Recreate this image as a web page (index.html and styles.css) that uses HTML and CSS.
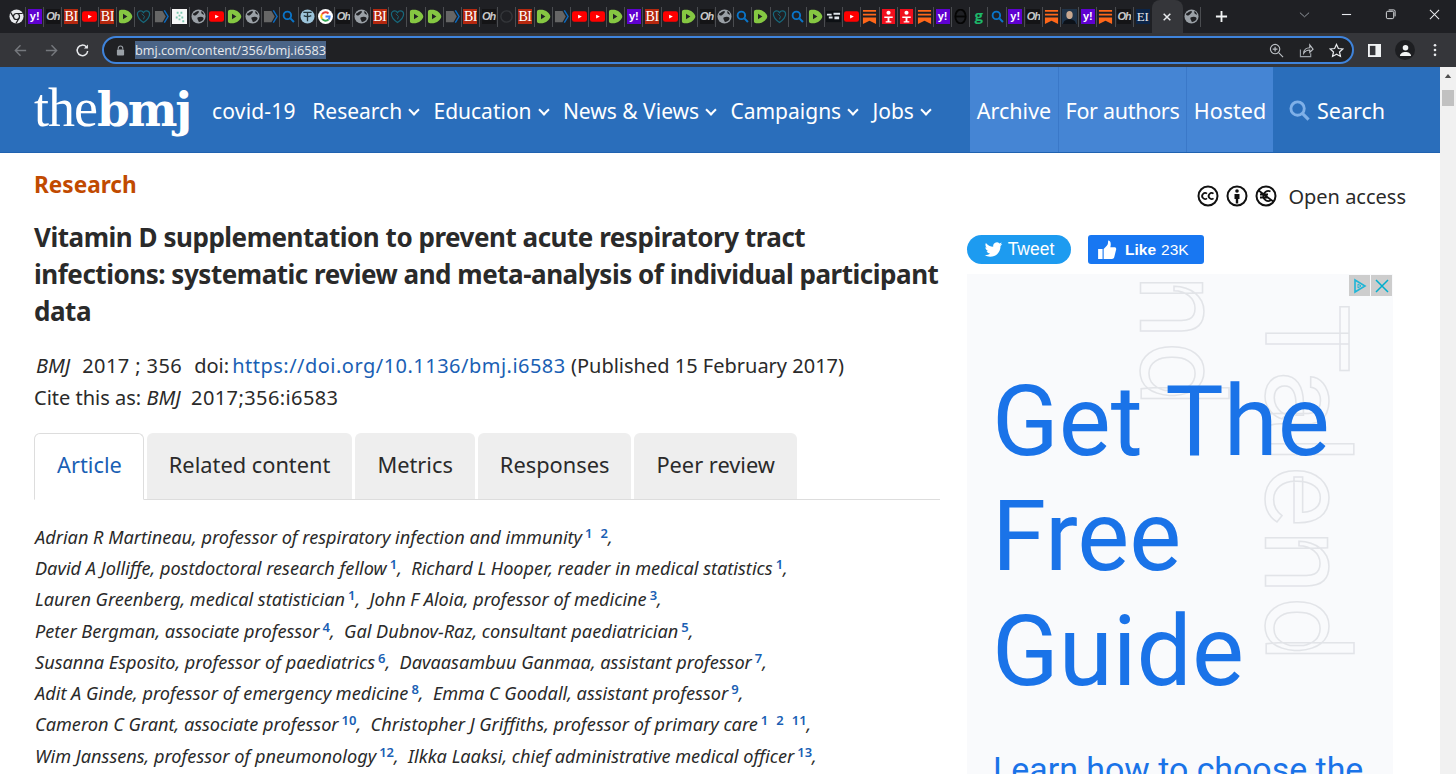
FILE: index.html
```html
<!DOCTYPE html>
<html lang="en">
<head>
    <meta charset="UTF-8">
    <meta name="viewport" content="width=device-width, initial-scale=1.0">
    <title>Vitamin D supplementation to prevent acute respiratory tract infections</title>
    <link rel="stylesheet" href="styles.css">
</head>
<body>
    <svg class="sprite" aria-hidden="true">
        <symbol id="chrome" viewBox="0 0 16 16"><circle cx="8" cy="8" r="7.500" fill="#e8eaed"/><circle cx="8" cy="8" r="3.200" fill="#e8eaed" stroke="#202124" stroke-width="1.300"/><path d="M8 4.800h6.600M5.200 9.600L1.900 3.900M10.800 9.600L7.500 15.300" stroke="#202124" stroke-width="1.300" fill="none"/></symbol>
        <symbol id="globe" viewBox="0 0 16 16"><circle cx="8" cy="8" r="7.500" fill="#9aa0a6"/><path d="M2 5c2-1 4-3 6-3 1 1 0 2-1 3S5 7 4 7 2 6 2 5zM7 9c2-1 5-1 6 0s0 3-2 4-3 1-3 0-2-3-1-4zM11 2c2 1 3 3 3 4-1 0-3-1-3-2z" fill="#202124"/></symbol>
        <symbol id="yt" viewBox="0 0 16 16"><rect x="0" y="2.500" width="16" height="11" rx="2.400" fill="#f00"/><path d="M6.500 6l4 2-4 2z" fill="#fff"/></symbol>
        <symbol id="rumble" viewBox="0 0 16 16"><path d="M3.400.8h3.400c3 0 8.400 4 8.400 7.200s-5.400 7.200-8.400 7.200H3.400C2 15.200 1 14 1 13V3C1 1.800 2 .8 3.400.8z" fill="#85c742"/><path d="M5.300 5v6l4.700-3z" fill="#202124"/></symbol>
        <symbol id="heart" viewBox="0 0 16 16"><path d="M8 14.500C4 11.500 1.500 8.500 1.500 5.500 1.500 3 3.500 2 5 2c1.300 0 2.300.7 3 1.800C8.700 2.700 9.700 2 11 2c1.500 0 3.500 1 3.500 3.500 0 3-2.500 6-6.500 9z" fill="none" stroke="#17677a" stroke-width="1.300"/><path d="M6 5l3 3-1 3" fill="none" stroke="#17677a"/></symbol>
        <symbol id="arrow" viewBox="0 0 16 16"><path d="M1 2h8l3.500 6L9 14H1z" fill="#666"/><path d="M11 1.500L15 8l-4 6.500" fill="none" stroke="#0a6cc4" stroke-width="1.500"/></symbol>
        <symbol id="search" viewBox="0 0 16 16"><circle cx="6.800" cy="6.800" r="4" fill="none" stroke="#0a74c8" stroke-width="2"/><path d="M10 10l3.800 3.800" stroke="#0a74c8" stroke-width="2.200"/></symbol>
        <symbol id="tether" viewBox="0 0 16 16"><circle cx="8" cy="8" r="7.500" fill="#9cc4da"/><path d="M3.500 3.500h9M8 3.500v9.500M4 7c2 1 6 1 8 0" fill="none" stroke="#23343a" stroke-width="1.400"/></symbol>
        <symbol id="google" viewBox="0 0 16 16"><circle cx="8" cy="8" r="8" fill="#fff"/><path d="M8 8h4.500a4.500 4.500 0 0 1-1.300 3.200" fill="none" stroke="#4285f4" stroke-width="2"/><path d="M11.200 11.200A4.500 4.500 0 0 1 4.300 10.500" fill="none" stroke="#34a853" stroke-width="2"/><path d="M4.300 10.500a4.500 4.500 0 0 1 0-5" fill="none" stroke="#fbbc05" stroke-width="2"/><path d="M4.300 5.500a4.500 4.500 0 0 1 6.900-.7" fill="none" stroke="#ea4335" stroke-width="2"/></symbol>
        <symbol id="qr" viewBox="0 0 16 16"><rect width="16" height="16" fill="#f7f7f7"/><path d="M5 3h2v2H5zM9 3h2v2H9zM7 6h2v2H7zM4 8h2v2H4zM10 8h2v2h-2zM7 10h2v2H7zM11 12h2v2h-2z" fill="#7cc9b0"/></symbol>
        <symbol id="dark" viewBox="0 0 16 16"><circle cx="8" cy="8" r="6" fill="none" stroke="#34363a" stroke-width="1.500"/></symbol>
        <symbol id="news" viewBox="0 0 16 16"><rect y="2" width="16" height="12" fill="#0d1014"/><path d="M1 5h5v2H1zM8 4h7v2H8zM3 8h4v2H3zM9 8h5v3H9z" fill="#dfe5ea"/></symbol>
        <symbol id="substack" viewBox="0 0 16 16"><path d="M1 1h14v2H1zM1 5h14v2H1zM1 9h14v7l-7-3.400L1 16z" fill="#ff6719"/></symbol>
        <symbol id="redfig" viewBox="0 0 16 16"><rect x="1" y="0" width="14" height="16" fill="#f10f1d"/><circle cx="8" cy="4" r="2.200" fill="#fff"/><path d="M3.500 8h9v1.500H9V13h2v1.500H5V13h2V9.500H3.500z" fill="#fff"/></symbol>
        <symbol id="theta" viewBox="0 0 16 16"><ellipse cx="8" cy="8" rx="5.500" ry="7.300" fill="none" stroke="#050505" stroke-width="2"/><path d="M3 8h10" stroke="#050505" stroke-width="2"/></symbol>
        <symbol id="photo" viewBox="0 0 16 16"><rect width="16" height="16" fill="#20344a"/><ellipse cx="8" cy="6.500" rx="3.400" ry="4.400" fill="#c9a890"/><path d="M1 16c1-4 4-5 7-5s6 1 7 5z" fill="#0c1118"/></symbol>
        <symbol id="twitter" viewBox="0 0 24 24"><path d="M23 5.100c-.8.400-1.700.6-2.600.700.900-.6 1.600-1.400 2-2.500-.9.500-1.900.9-2.900 1.100a4.600 4.600 0 0 0-7.800 4.200C8 8.400 4.600 6.600 2.400 3.800c-1.200 2.100-.6 4.800 1.400 6.100-.7 0-1.400-.2-2.100-.6 0 2.200 1.600 4.100 3.700 4.600-.7.200-1.400.2-2.100.1.600 1.800 2.300 3.100 4.300 3.200-1.900 1.500-4.300 2.200-6.800 1.900 2 1.300 4.500 2.100 7 2.100 8.500 0 13.300-7.200 13-13.600.9-.7 1.700-1.500 2.200-2.500z" fill="#fff"/></symbol>
    </svg>

    <div class="tabstrip">
        <span class="tab"><svg><use href="#chrome"/></svg></span>
        <span class="tab"><b class="yh">y!</b></span>
        <span class="tab"><b class="oh">Oh</b></span>
        <span class="tab"><b class="bi">BI</b></span>
        <span class="tab"><svg><use href="#yt"/></svg></span>
        <span class="tab"><b class="bi">BI</b></span>
        <span class="tab"><svg><use href="#rumble"/></svg></span>
        <span class="tab"><svg><use href="#heart"/></svg></span>
        <span class="tab"><svg><use href="#arrow"/></svg></span>
        <span class="tab"><svg><use href="#qr"/></svg></span>
        <span class="tab"><svg><use href="#globe"/></svg></span>
        <span class="tab"><svg><use href="#yt"/></svg></span>
        <span class="tab"><svg><use href="#rumble"/></svg></span>
        <span class="tab"><svg><use href="#globe"/></svg></span>
        <span class="tab"><svg><use href="#arrow"/></svg></span>
        <span class="tab"><svg><use href="#search"/></svg></span>
        <span class="tab"><svg><use href="#tether"/></svg></span>
        <span class="tab"><svg><use href="#google"/></svg></span>
        <span class="tab"><b class="oh">Oh</b></span>
        <span class="tab"><svg><use href="#globe"/></svg></span>
        <span class="tab"><b class="bi">BI</b></span>
        <span class="tab"><svg><use href="#heart"/></svg></span>
        <span class="tab"><svg><use href="#rumble"/></svg></span>
        <span class="tab"><svg><use href="#rumble"/></svg></span>
        <span class="tab"><svg><use href="#arrow"/></svg></span>
        <span class="tab"><b class="bi">BI</b></span>
        <span class="tab"><b class="oh">Oh</b></span>
        <span class="tab"><svg><use href="#dark"/></svg></span>
        <span class="tab"><b class="bi">BI</b></span>
        <span class="tab"><svg><use href="#rumble"/></svg></span>
        <span class="tab"><svg><use href="#arrow"/></svg></span>
        <span class="tab"><svg><use href="#yt"/></svg></span>
        <span class="tab"><svg><use href="#yt"/></svg></span>
        <span class="tab"><svg><use href="#rumble"/></svg></span>
        <span class="tab"><b class="yh">y!</b></span>
        <span class="tab"><b class="bi">BI</b></span>
        <span class="tab"><svg><use href="#yt"/></svg></span>
        <span class="tab"><svg><use href="#rumble"/></svg></span>
        <span class="tab"><b class="oh">Oh</b></span>
        <span class="tab"><svg><use href="#globe"/></svg></span>
        <span class="tab"><svg><use href="#search"/></svg></span>
        <span class="tab"><svg><use href="#rumble"/></svg></span>
        <span class="tab"><svg><use href="#heart"/></svg></span>
        <span class="tab"><svg><use href="#search"/></svg></span>
        <span class="tab"><svg><use href="#rumble"/></svg></span>
        <span class="tab"><svg><use href="#news"/></svg></span>
        <span class="tab"><svg><use href="#yt"/></svg></span>
        <span class="tab"><svg><use href="#substack"/></svg></span>
        <span class="tab"><svg><use href="#redfig"/></svg></span>
        <span class="tab"><svg><use href="#redfig"/></svg></span>
        <span class="tab"><svg><use href="#substack"/></svg></span>
        <span class="tab"><b class="yh">y!</b></span>
        <span class="tab"><svg><use href="#theta"/></svg></span>
        <span class="tab"><b class="gg">g</b></span>
        <span class="tab"><svg><use href="#search"/></svg></span>
        <span class="tab"><b class="yh">y!</b></span>
        <span class="tab"><b class="oh">Oh</b></span>
        <span class="tab"><svg><use href="#substack"/></svg></span>
        <span class="tab"><svg><use href="#photo"/></svg></span>
        <span class="tab"><b class="yh">y!</b></span>
        <span class="tab"><svg><use href="#substack"/></svg></span>
        <span class="tab"><b class="oh">Oh</b></span>
        <span class="tab no-sep"><b class="ei">EI</b></span>
        <span class="tab-active">
            <svg viewBox="0 0 12 12"><path d="M2 2l8 8M10 2l-8 8" stroke="#e8eaed" stroke-width="1.800"/></svg>
        </span>
        <span class="tab"><svg><use href="#globe"/></svg></span>
        <span class="new-tab">
            <svg viewBox="0 0 14 14"><path d="M7 1v12M1 7h12" stroke="#f1f3f4" stroke-width="2"/></svg>
        </span>
        <div class="window-btns">
            <svg viewBox="0 0 12 12"><path d="M1 4l5 4.500L11 4" fill="none" stroke="#9aa0a6"/></svg>
            <svg viewBox="0 0 12 12"><path d="M1 6h10" stroke="#e8eaed" stroke-width="1.200"/></svg>
            <svg viewBox="0 0 12 12"><rect x="1.500" y="2.500" width="8" height="8" rx="1.500" fill="none" stroke="#e8eaed"/><path d="M4 1h5.500a1.500 1.500 0 0 1 1.500 1.500V8" fill="none" stroke="#e8eaed"/></svg>
            <svg viewBox="0 0 12 12"><path d="M1 1l10 10M11 1L1 11" stroke="#e8eaed" stroke-width="1.100"/></svg>
        </div>
    </div>

    <div class="toolbar">
        <svg class="tool-btn" viewBox="0 0 16 16"><path d="M14 8H2.500M8 2.500L2.500 8 8 13.500" fill="none" stroke="#75787d" stroke-width="1.500"/></svg>
        <svg class="tool-btn" viewBox="0 0 16 16"><path d="M2 8h11.500M8 2.500L13.500 8 8 13.500" fill="none" stroke="#75787d" stroke-width="1.500"/></svg>
        <svg class="tool-btn" viewBox="0 0 16 16"><path d="M13.500 8.500A5.600 5.600 0 1 1 12 4" fill="none" stroke="#e8eaed" stroke-width="1.600"/><path d="M13.800 1.500v4.300H9.500z" fill="#e8eaed"/></svg>
        <div class="omnibox">
            <svg class="lock" viewBox="0 0 10 12"><path d="M2.500 5V3.500a2.500 2.500 0 0 1 5 0V5" fill="none" stroke="#9aa0a6" stroke-width="1.200"/><rect x="1" y="5" width="8" height="6.500" rx="1" fill="#9aa0a6"/></svg>
            <span class="url">bmj.com/content/356/bmj.i6583</span>
            <div class="omni-icons">
                <svg viewBox="0 0 16 16"><circle cx="6.500" cy="6.500" r="5" fill="none" stroke="#bdc1c6" stroke-width="1.200"/><path d="M10.500 10.500L15 15M4 6.500h5M6.500 4v5" stroke="#bdc1c6" stroke-width="1.200"/></svg>
                <svg viewBox="0 0 16 16"><path d="M1.500 7v7.500h11V11" fill="none" stroke="#9aa0a6" stroke-width="1.200"/><path d="M5 11c0-4 3-6 6.500-6V2L15 6.500 11.500 10V7.500C8.500 7.500 6.500 8.500 5 11z" fill="none" stroke="#bdc1c6" stroke-width="1.200"/></svg>
                <svg viewBox="0 0 16 16"><path d="M8 1.500l2 4.400 4.700.5-3.500 3.200 1 4.700L8 11.900l-4.200 2.400 1-4.700L1.300 6.400 6 5.900z" fill="none" stroke="#e8eaed" stroke-width="1.300"/></svg>
            </div>
        </div>
        <svg class="side-panel" viewBox="0 0 14 14"><rect x="1" y="1" width="12" height="12" fill="none" stroke="#f1f3f4" stroke-width="2"/><rect x="8" y="1" width="5" height="12" fill="#f1f3f4"/></svg>
        <span class="avatar">
            <svg viewBox="0 0 14 14"><circle cx="7" cy="4" r="3" fill="#f1f3f4"/><path d="M1 13c0-3 3-4.500 6-4.500s6 1.500 6 4.500z" fill="#f1f3f4"/></svg>
        </span>
        <svg class="menu-dots" viewBox="0 0 4 16"><circle cx="2" cy="2.500" r="1.500" fill="#e8eaed"/><circle cx="2" cy="8" r="1.500" fill="#e8eaed"/><circle cx="2" cy="13.500" r="1.500" fill="#e8eaed"/></svg>
    </div>

    <div class="viewport">
        <div class="page">
            <header class="site-header">
                <a class="logo"><span class="logo-the">the</span><span class="logo-bmj">bmj</span></a>
                <nav class="main-nav">
                    <a class="nav-covid">covid-19</a>
                    <a class="has-menu">Research</a>
                    <a class="has-menu">Education</a>
                    <a class="has-menu">News &amp; Views</a>
                    <a class="has-menu">Campaigns</a>
                    <a class="has-menu">Jobs</a>
                </nav>
                <nav class="side-nav">
                    <a class="nav-archive">Archive</a>
                    <a class="nav-authors">For authors</a>
                    <a class="nav-hosted">Hosted</a>
                </nav>
                <a class="search-link">
                    <svg viewBox="0 0 22 22"><circle cx="9" cy="9" r="7" fill="none" stroke="#7fb0e8" stroke-width="3"/><path d="M14 14l6.500 6.500" stroke="#7fb0e8" stroke-width="3.200"/></svg>
                    Search
                </a>
            </header>

            <div class="content">
                <main class="article">
                    <p class="section-label">Research</p>
                    <h1>Vitamin D supplementation to prevent acute respiratory tract infections: systematic review and meta-analysis of individual participant data</h1>
                    <p class="meta"><em class="journal">BMJ</em><span class="volume">2017 ; 356</span><span class="doi">doi:</span> <a href="#">https://doi.org/10.1136/bmj.i6583</a> (Published 15 February 2017)</p>
                    <p class="meta">Cite this as: <em>BMJ</em>&nbsp; <span class="cite-ref">2017;356:i6583</span></p>

                    <ul class="tabs">
                        <li class="active">Article</li>
                        <li>Related content</li>
                        <li>Metrics</li>
                        <li>Responses</li>
                        <li>Peer review</li>
                    </ul>

                    <div class="authors">
                        <p>Adrian R Martineau, professor of respiratory infection and immunity<sup>1</sup><sup class="next">2</sup>,</p>
                        <p>David A Jolliffe, postdoctoral research fellow<sup>1</sup>, &nbsp;Richard L Hooper, reader in medical statistics<sup>1</sup>,</p>
                        <p>Lauren Greenberg, medical statistician<sup>1</sup>, &nbsp;John F Aloia, professor of medicine<sup>3</sup>,</p>
                        <p>Peter Bergman, associate professor<sup>4</sup>, &nbsp;Gal Dubnov-Raz, consultant paediatrician<sup>5</sup>,</p>
                        <p>Susanna Esposito, professor of paediatrics<sup>6</sup>, &nbsp;Davaasambuu Ganmaa, assistant professor<sup>7</sup>,</p>
                        <p>Adit A Ginde, professor of emergency medicine<sup>8</sup>, &nbsp;Emma C Goodall, assistant professor<sup>9</sup>,</p>
                        <p>Cameron C Grant, associate professor<sup>10</sup>, &nbsp;Christopher J Griffiths, professor of primary care<sup>1</sup><sup class="next">2</sup><sup class="next">11</sup>,</p>
                        <p>Wim Janssens, professor of pneumonology<sup>12</sup>, &nbsp;Ilkka Laaksi, chief administrative medical officer<sup>13</sup>,</p>
                    </div>
                </main>

                <aside class="sidebar">
                    <div class="licence">
                        <svg viewBox="0 0 22 22"><circle cx="11" cy="11" r="9.500" fill="none" stroke="#111" stroke-width="2"/><path d="M10 8.600a3 3 0 1 0 0 4.800M16.500 8.600a3 3 0 1 0 0 4.800" fill="none" stroke="#111" stroke-width="1.800"/></svg>
                        <svg viewBox="0 0 22 22"><circle cx="11" cy="11" r="9.500" fill="none" stroke="#111" stroke-width="2"/><circle cx="11" cy="6" r="1.800" fill="#111"/><path d="M8.500 9h5v5h-1.300v4.500H9.800V14H8.500z" fill="#111"/></svg>
                        <svg viewBox="0 0 22 22"><circle cx="11" cy="11" r="9.500" fill="none" stroke="#111" stroke-width="2"/><path d="M15.500 6.500a5 5 0 1 0 0 9M5 9.500h8M5 12.500h8M3 5l16 12" fill="none" stroke="#111" stroke-width="1.800"/></svg>
                        <span>Open access</span>
                    </div>
                    <div class="social">
                        <a class="tweet"><svg><use href="#twitter"/></svg>Tweet</a>
                        <a class="like">
                            <svg viewBox="0 0 18 18"><path d="M1 8h4v9H1zM6 8l3-3c1-1 1-3 1-4.500 2 0 3 2 2 6h4c1.500 0 1.500 2 1 3l-1.500 6c-.3 1-1 1.500-2 1.500H6z" fill="#fff"/></svg>
                            <strong>Like</strong> 23K
                        </a>
                    </div>
                    <div class="ad">
                        <span class="outline outline-back">Talend</span>
                        <span class="outline outline-front">Talend</span>
                        <div class="ad-badges">
                            <span><svg viewBox="0 0 16 16"><path d="M3 2l10 6-10 6z" fill="none" stroke="#1fb5d6" stroke-width="1.600"/><path d="M6 6v4l3-2z" fill="none" stroke="#1fb5d6"/></svg></span>
                            <span><svg viewBox="0 0 16 16"><path d="M2 2l12 12M14 2L2 14" stroke="#00aecd" stroke-width="1.500"/></svg></span>
                        </div>
                        <h2>Get The Free Guide</h2>
                        <p>Learn how to choose the</p>
                    </div>
                </aside>
            </div>
        </div>
        <div class="scrollbar">
            <svg viewBox="0 0 8 5"><path d="M4 0l4 5H0z" fill="#505050"/></svg>
            <span class="thumb"></span>
        </div>
    </div>
</body>
</html>
```

FILE: styles.css
```css
* {
    box-sizing: border-box;
}

html, body {
    margin: 0;
    height: 774px;
    overflow: hidden;
    background: #fff;
    font-family: "Noto Sans", sans-serif;
}

.sprite {
    display: none;
}

/* Browser tabs */
.tabstrip {
    display: flex;
    align-items: center;
    height: 33px;
    padding-left: 8px;
    background: #1f2024;
}

.tab {
    flex: 0 0 18.17px;
    height: 20px;
    display: flex;
    align-items: center;
    justify-content: center;
    border-right: 1px solid #4a4c50;
}

.tab.no-sep {
    border-right: none;
}

.tab svg {
    width: 15px;
    height: 15px;
}

.tab b {
    display: block;
    width: 14px;
    height: 15px;
    font-size: 11px;
    line-height: 15px;
    text-align: center;
    overflow: hidden;
}

.yh {
    background: #5f01d1;
    color: #fff;
    font-family: "Liberation Sans", sans-serif;
}

.oh {
    color: #c8c8c8;
    font-style: italic;
    font-family: "Liberation Sans", sans-serif;
    letter-spacing: -1px;
    background: #141416;
}

.tab .bi {
    background: #b5280f;
    color: #fff;
    font-family: "Liberation Serif", serif;
    font-weight: 400;
    font-size: 14px;
    letter-spacing: -0.500px;
}

.tab .gg {
    color: #1db86a;
    font-size: 15px;
    line-height: 12px;
    font-family: "Open Sans", sans-serif;
    background: none;
}

.tab .ei {
    background: #0b2447;
    color: #e8eaed;
    font-family: "Liberation Serif", serif;
    font-weight: 400;
    font-size: 13px;
}

.tab-active {
    flex: 0 0 31px;
    height: 33px;
    display: flex;
    align-items: center;
    justify-content: center;
    background: #35363a;
    border-radius: 8px 8px 0 0;
}

.tab-active svg {
    width: 10px;
    height: 10px;
}

.new-tab {
    display: flex;
    margin-left: 14px;
}

.new-tab svg {
    width: 13px;
    height: 13px;
}

.window-btns {
    margin-left: auto;
    display: flex;
    align-items: center;
    gap: 33px;
    padding-right: 16px;
}

.window-btns svg {
    width: 11px;
    height: 11px;
    margin-top: -4px;
}

.window-btns svg:first-child {
    margin-right: -2px;
}

/* Browser toolbar */
.toolbar {
    display: flex;
    align-items: center;
    height: 34px;
    padding-left: 13px;
    background: #35363a;
}

.tool-btn {
    width: 15px;
    height: 15px;
    margin-right: 16px;
}

.omnibox {
    flex: 0 0 1252px;
    height: 28px;
    margin-left: -4px;
    display: flex;
    align-items: center;
    padding-left: 12px;
    padding-right: 8px;
    background: #202124;
    border: 2px solid #3f84dc;
    border-radius: 14px;
}

.lock {
    width: 9px;
    height: 11px;
    margin-right: 10px;
}

.url {
    font-family: "Open Sans", sans-serif;
    font-size: 12.700px;
    line-height: 18px;
    color: #e8eaed;
    background: #4a6487;
}

.omni-icons {
    margin-left: auto;
    display: flex;
    gap: 15px;
}

.omni-icons svg {
    width: 15px;
    height: 15px;
}

.side-panel {
    width: 13px;
    height: 13px;
    margin-left: 14px;
}

.avatar {
    width: 20px;
    height: 20px;
    margin-left: 14px;
    display: flex;
    align-items: center;
    justify-content: center;
    background: #1d1e21;
    border-radius: 50%;
}

.avatar svg {
    width: 13px;
    height: 13px;
}

.menu-dots {
    width: 4px;
    height: 14px;
    margin-left: 18px;
}

/* Page area */
.viewport {
    display: flex;
    height: 707px;
    overflow: hidden;
}

.page {
    flex: 1;
    min-width: 0;
}

.scrollbar {
    flex: 0 0 16px;
    display: flex;
    flex-direction: column;
    align-items: center;
    padding-top: 7px;
    background: #f1f1f1;
}

.scrollbar svg {
    width: 8px;
    height: 4px;
}

.thumb {
    width: 12px;
    height: 16px;
    margin-top: 12px;
    background: #c1c1c1;
}

/* Site header */
.site-header {
    display: flex;
    align-items: stretch;
    height: 86px;
    padding-left: 34px;
    background: #2a6ebb;
    border-bottom: 1px solid #1f62b0;
    color: #fff;
}

.logo {
    width: 178px;
    display: flex;
    align-items: baseline;
    padding-top: 11px;
    line-height: 60px;
}

.logo-the {
    font-family: "Liberation Serif", serif;
    font-size: 54px;
    letter-spacing: -1px;
}

.logo-bmj {
    font-family: "DejaVu Serif", serif;
    font-weight: 700;
    font-size: 47px;
    letter-spacing: -2.200px;
}

.main-nav {
    display: flex;
    align-items: center;
    width: 758px;
    gap: 14.300px;
    padding-top: 2px;
    font-size: 21px;
}

.nav-covid {
    margin-right: 2.200px;
    letter-spacing: 0.200px;
}

.has-menu::after {
    content: "";
    display: inline-block;
    width: 6px;
    height: 6px;
    margin: 0 1px 5px 8px;
    border-right: 2px solid #fff;
    border-bottom: 2px solid #fff;
    transform: rotate(45deg);
}

.side-nav {
    display: flex;
    background: #4585d4;
    font-size: 21.500px;
}

.side-nav a {
    display: flex;
    align-items: center;
    justify-content: center;
    padding-top: 2px;
    white-space: nowrap;
    border-right: 1px solid #3a78c8;
}

.nav-archive {
    width: 89px;
}

.nav-authors {
    width: 128px;
    letter-spacing: -0.300px;
}

.side-nav .nav-hosted {
    width: 86px;
    border-right: none;
}

.search-link {
    display: flex;
    align-items: center;
    gap: 7px;
    padding-top: 2px;
    padding-left: 16px;
    font-size: 21.500px;
}

.search-link svg {
    width: 21px;
    height: 21px;
}

/* Article */
.content {
    display: flex;
}

.article {
    flex: 0 0 906px;
    margin-left: 34px;
}

.section-label {
    margin: 17px 0 0;
    font-size: 22.600px;
    line-height: 29px;
    font-weight: 700;
    color: #c14a00;
}

h1 {
    margin: 20px 0 0;
    font-size: 26px;
    line-height: 37.200px;
    font-weight: 700;
    letter-spacing: -0.470px;
    color: #2a2a2a;
}

.meta {
    margin: 0;
    font-size: 20px;
    line-height: 32px;
    color: #2a2a2a;
}

h1 + .meta {
    margin-top: 19px;
}

.meta a {
    color: #1a5fb4;
    text-decoration: none;
    letter-spacing: 0.480px;
}

.journal {
    margin-left: 2px;
}

.volume {
    margin-left: 12px;
    letter-spacing: 0.400px;
}

.doi {
    margin-left: 12px;
    margin-right: -2px;
}

.cite-ref {
    letter-spacing: 0.400px;
}

.tabs {
    display: flex;
    gap: 3px;
    margin: 19px 0 0;
    padding: 0;
    list-style: none;
    height: 67px;
    border-bottom: 1px solid #ddd;
}

.tabs li {
    display: flex;
    align-items: center;
    height: 66px;
    padding: 0 22px 3px;
    font-size: 21.800px;
    color: #2a2a2a;
    background: #eee;
    border-radius: 6px 6px 0 0;
}

.tabs li.active {
    height: 67px;
    padding-right: 21px;
    color: #1a5fb4;
    background: #fff;
    border: 1px solid #ddd;
    border-bottom: 1px solid #fff;
}

.authors {
    margin-top: 22px;
    margin-left: 1px;
    font-size: 18.150px;
    font-style: italic;
    color: #2a2a2a;
}

.authors p {
    margin: 0;
    height: 31.300px;
    line-height: 31.300px;
    white-space: nowrap;
}

sup {
    margin-left: 3px;
    font-size: 13px;
    font-style: normal;
    font-weight: 600;
    color: #1a5fb4;
    line-height: 0;
    vertical-align: 6px;
}

sup.next {
    margin-left: 8px;
}

/* Sidebar */
.sidebar {
    flex: 0 0 473px;
    margin-left: 27px;
}

.licence {
    display: flex;
    align-items: center;
    justify-content: flex-end;
    gap: 7px;
    height: 30px;
    margin-top: 28px;
    padding-right: 34px;
    font-size: 20px;
    color: #2a2a2a;
}

.licence svg {
    width: 22px;
    height: 22px;
}

.licence span {
    margin-left: 4px;
}

.social {
    display: flex;
    gap: 17px;
    margin-top: 24px;
    height: 29px;
    color: #fff;
    font-family: "Liberation Sans", sans-serif;
}

.tweet {
    display: flex;
    align-items: center;
    justify-content: center;
    gap: 5px;
    width: 104px;
    background: #1d9bf0;
    border-radius: 15px;
    font-size: 17.500px;
}

.tweet svg {
    width: 19px;
    height: 19px;
}

.like {
    display: flex;
    align-items: center;
    gap: 5px;
    width: 116px;
    padding-left: 9px;
    background: #1877f2;
    border-radius: 3px;
    font-size: 15.500px;
}

.like svg {
    width: 20px;
    height: 20px;
    margin-right: 3px;
}

.ad {
    position: relative;
    width: 426px;
    height: 500px;
    margin-top: 10px;
    padding: 90px 0 0 25px;
    overflow: hidden;
    background: #f9fafc;
    font-family: Roboto, sans-serif;
    color: #1a73e8;
}

.ad h2 {
    position: relative;
    margin: 0;
    width: 380px;
    font-size: 98px;
    line-height: 115px;
    font-weight: 400;
}

.ad p {
    position: relative;
    margin: 41px 0 0 1px;
    font-size: 33.900px;
    line-height: 40px;
    white-space: nowrap;
}

.outline {
    position: absolute;
    writing-mode: vertical-rl;
    font-size: 116px;
    letter-spacing: 2.500px;
    line-height: 1;
    color: transparent;
    -webkit-text-stroke: 1.500px #e2e4e8;
}

.outline-front {
    top: 30px;
    left: 281px;
}

.outline-back {
    top: -225px;
    left: 156px;
}

.ad-badges {
    position: absolute;
    top: 1px;
    right: 1px;
    display: flex;
    gap: 1px;
}

.ad-badges span {
    display: flex;
    align-items: center;
    justify-content: center;
    width: 21px;
    height: 21px;
    background: #cdcdcd;
}

.ad-badges svg {
    width: 16px;
    height: 16px;
}
```
